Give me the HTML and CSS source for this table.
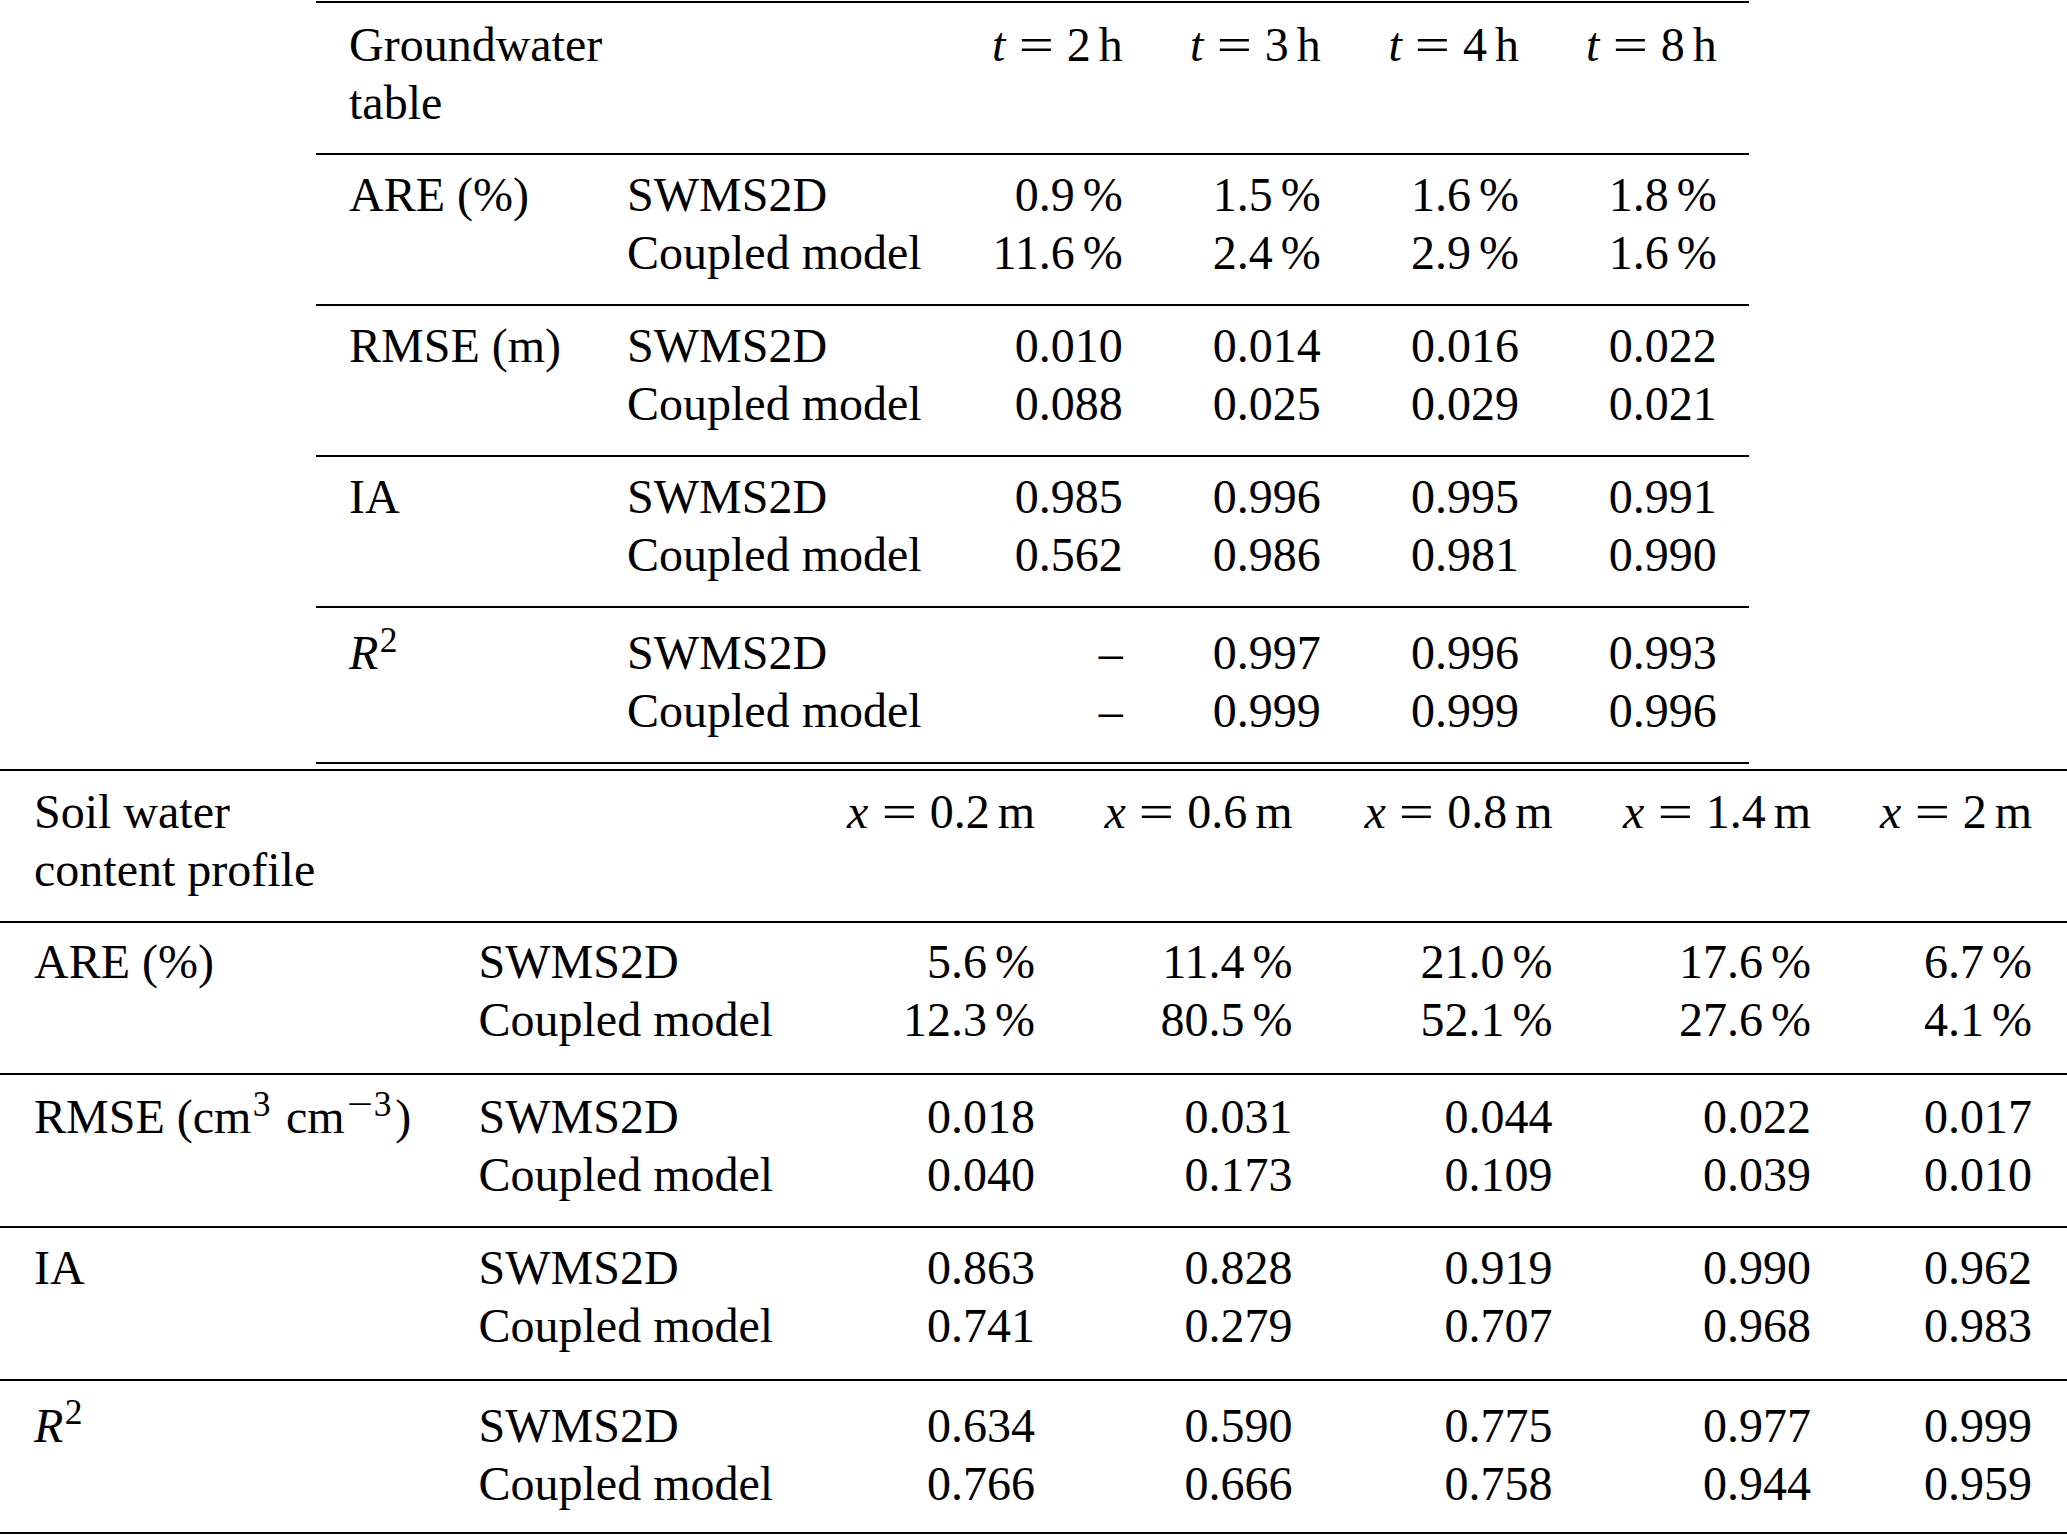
FILE: index.html
```html
<!DOCTYPE html>
<html lang="en">
<head>
<meta charset="utf-8">
<title>Groundwater table and soil water content statistics</title>
<link rel="stylesheet" href="styles.css">
</head>
<body>
<main class="page">
  <section class="tbl tbl-gw">
    <div class="row head">
      <div class="cell label">Groundwater<br>table</div>
      <div class="cell model"></div>
      <div class="cell num"><span class="math"><i>t</i><span class="eq">=</span>2<span class="th"></span>h</span></div>
      <div class="cell num"><span class="math"><i>t</i><span class="eq">=</span>3<span class="th"></span>h</span></div>
      <div class="cell num"><span class="math"><i>t</i><span class="eq">=</span>4<span class="th"></span>h</span></div>
      <div class="cell num"><span class="math"><i>t</i><span class="eq">=</span>8<span class="th"></span>h</span></div>
    </div>
    <div class="row body r-are">
      <div class="cell label">ARE (%)</div>
      <div class="cell model"><div>SWMS2D</div><div>Coupled model</div></div>
      <div class="cell num"><div>0.9<span class="th"></span>%</div><div>11.6<span class="th"></span>%</div></div>
      <div class="cell num"><div>1.5<span class="th"></span>%</div><div>2.4<span class="th"></span>%</div></div>
      <div class="cell num"><div>1.6<span class="th"></span>%</div><div>2.9<span class="th"></span>%</div></div>
      <div class="cell num"><div>1.8<span class="th"></span>%</div><div>1.6<span class="th"></span>%</div></div>
    </div>
    <div class="row body">
      <div class="cell label">RMSE (m)</div>
      <div class="cell model"><div>SWMS2D</div><div>Coupled model</div></div>
      <div class="cell num"><div>0.010</div><div>0.088</div></div>
      <div class="cell num"><div>0.014</div><div>0.025</div></div>
      <div class="cell num"><div>0.016</div><div>0.029</div></div>
      <div class="cell num"><div>0.022</div><div>0.021</div></div>
    </div>
    <div class="row body">
      <div class="cell label">IA</div>
      <div class="cell model"><div>SWMS2D</div><div>Coupled model</div></div>
      <div class="cell num"><div>0.985</div><div>0.562</div></div>
      <div class="cell num"><div>0.996</div><div>0.986</div></div>
      <div class="cell num"><div>0.995</div><div>0.981</div></div>
      <div class="cell num"><div>0.991</div><div>0.990</div></div>
    </div>
    <div class="row body r-sq">
      <div class="cell label"><i>R</i><sup>2</sup></div>
      <div class="cell model"><div>SWMS2D</div><div>Coupled model</div></div>
      <div class="cell num"><div>–</div><div>–</div></div>
      <div class="cell num"><div>0.997</div><div>0.999</div></div>
      <div class="cell num"><div>0.996</div><div>0.999</div></div>
      <div class="cell num"><div>0.993</div><div>0.996</div></div>
    </div>
  </section>

  <section class="tbl tbl-sw">
    <div class="row head">
      <div class="cell label">Soil water<br>content profile</div>
      <div class="cell model"></div>
      <div class="cell num"><span class="math"><i>x</i><span class="eq">=</span>0.2<span class="th"></span>m</span></div>
      <div class="cell num"><span class="math"><i>x</i><span class="eq">=</span>0.6<span class="th"></span>m</span></div>
      <div class="cell num"><span class="math"><i>x</i><span class="eq">=</span>0.8<span class="th"></span>m</span></div>
      <div class="cell num"><span class="math"><i>x</i><span class="eq">=</span>1.4<span class="th"></span>m</span></div>
      <div class="cell num"><span class="math"><i>x</i><span class="eq">=</span>2<span class="th"></span>m</span></div>
    </div>
    <div class="row body r-are">
      <div class="cell label">ARE (%)</div>
      <div class="cell model"><div>SWMS2D</div><div>Coupled model</div></div>
      <div class="cell num"><div>5.6<span class="th"></span>%</div><div>12.3<span class="th"></span>%</div></div>
      <div class="cell num"><div>11.4<span class="th"></span>%</div><div>80.5<span class="th"></span>%</div></div>
      <div class="cell num"><div>21.0<span class="th"></span>%</div><div>52.1<span class="th"></span>%</div></div>
      <div class="cell num"><div>17.6<span class="th"></span>%</div><div>27.6<span class="th"></span>%</div></div>
      <div class="cell num"><div>6.7<span class="th"></span>%</div><div>4.1<span class="th"></span>%</div></div>
    </div>
    <div class="row body r-rmse">
      <div class="cell label">RMSE (cm<sup>3</sup> cm<sup><span class="minus">−</span>3</sup>)</div>
      <div class="cell model"><div>SWMS2D</div><div>Coupled model</div></div>
      <div class="cell num"><div>0.018</div><div>0.040</div></div>
      <div class="cell num"><div>0.031</div><div>0.173</div></div>
      <div class="cell num"><div>0.044</div><div>0.109</div></div>
      <div class="cell num"><div>0.022</div><div>0.039</div></div>
      <div class="cell num"><div>0.017</div><div>0.010</div></div>
    </div>
    <div class="row body r-ia">
      <div class="cell label">IA</div>
      <div class="cell model"><div>SWMS2D</div><div>Coupled model</div></div>
      <div class="cell num"><div>0.863</div><div>0.741</div></div>
      <div class="cell num"><div>0.828</div><div>0.279</div></div>
      <div class="cell num"><div>0.919</div><div>0.707</div></div>
      <div class="cell num"><div>0.990</div><div>0.968</div></div>
      <div class="cell num"><div>0.962</div><div>0.983</div></div>
    </div>
    <div class="row body r-sq">
      <div class="cell label"><i>R</i><sup>2</sup></div>
      <div class="cell model"><div>SWMS2D</div><div>Coupled model</div></div>
      <div class="cell num"><div>0.634</div><div>0.766</div></div>
      <div class="cell num"><div>0.590</div><div>0.666</div></div>
      <div class="cell num"><div>0.775</div><div>0.758</div></div>
      <div class="cell num"><div>0.977</div><div>0.944</div></div>
      <div class="cell num"><div>0.999</div><div>0.959</div></div>
    </div>
  </section>
</main>
</body>
</html>
```
FILE: styles.css
```css
html, body {
  margin: 0;
  padding: 0;
  background: #ffffff;
}

body {
  font-family: "Liberation Serif", "Times New Roman", serif;
  font-size: 48px;
  line-height: 58px;
  color: #000000;
}

.page {
  width: 2067px;
  height: 1536px;
  overflow: hidden;
}

.tbl {
  border-top: 2px solid #000;
}

.row {
  display: grid;
  border-bottom: 2px solid #000;
}

.cell {
  white-space: nowrap;
}

.num {
  text-align: right;
}

/* Groundwater table */
.tbl-gw {
  width: 1433px;
  margin: 1px 0 0 316px;
}

.tbl-gw .row {
  grid-template-columns: 278px 297.7px 198px 198px 198.3px 197.7px;
  padding: 11px 32.3px 22px 33px;
}

.tbl-gw .row.head {
  padding-top: 13px;
  padding-bottom: 21px;
}

.tbl-gw .row.r-sq {
  padding-top: 16px;
  padding-bottom: 22px;
}

/* Soil water content profile */
.tbl-sw {
  width: 2067px;
  margin-top: 5px;
}

.tbl-sw .row {
  grid-template-columns: 444.5px 298.5px 258px 257.5px 260px 258.5px 221px;
  padding: 11px 35px 24px 34px;
}

.tbl-sw .row.head {
  padding-top: 12px;
  padding-bottom: 22px;
}

.tbl-sw .row.r-are {
  padding-top: 10px;
  padding-bottom: 24px;
}

.tbl-sw .row.r-rmse {
  padding-top: 13px;
  padding-bottom: 22px;
}

.tbl-sw .row.r-ia {
  padding-top: 11px;
  padding-bottom: 24px;
}

.tbl-sw .row.r-sq {
  padding-top: 15.5px;
  padding-bottom: 19.5px;
}

/* inline math */
.math i,
.label i {
  font-style: italic;
}

.eq {
  display: inline-block;
  width: 0.72em;
  margin: 0 0.278em;
  text-align: center;
  transform: scaleX(1.3);
}

.th {
  display: inline-block;
  width: 0.167em;
}

sup {
  font-size: 0.74em;
  line-height: 0;
  vertical-align: 0.48em;
  margin: 0 0.1em 0 0.04em;
}

.minus {
  display: inline-block;
  width: 0.78em;
  text-align: center;
  transform: scaleX(1.3);
}
```
